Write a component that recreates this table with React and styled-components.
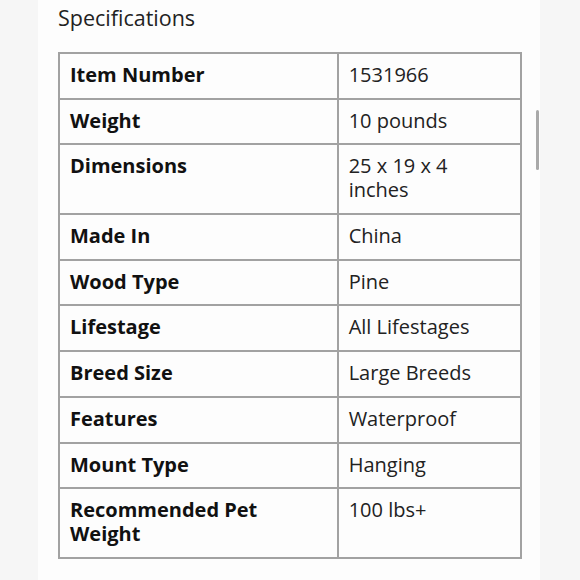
import React from 'react';
import styled, { createGlobalStyle } from 'styled-components';

const Global = createGlobalStyle`
body {
  margin: 0;
  background: #f6f6f6;
  font-family: "Open Sans", "Noto Sans", sans-serif;
  color: #1c1c1c;
}
`

const Page = styled.div`
position: relative;
width: 580px;
height: 580px;
overflow: hidden;
`

const Panel = styled.section`
margin-left: 38px;
width: 502px;
height: 580px;
background: #fdfdfd;
padding: 6px 18px 0 20px;
box-sizing: border-box;
`

const Title = styled.h2`
margin: 0 0 22px;
font-size: 21.5px;
line-height: 24px;
font-weight: 400;
color: #222;
`

const Table = styled.table`
width: 464px;
border-collapse: collapse;
font-size: 20px;
line-height: 24px;
`

const Cell = styled.td`
border: 2px solid #a2a2a2;
padding: 9px 10px 10.7px 10px;
vertical-align: top;
width: ${p => p.$w}px;
font-weight: ${p => (p.$bold ? 700 : 400)};
color: ${p => (p.$bold ? '#111' : '#222')};
`

const Scroll = styled.div`
position: absolute;
left: 536px;
top: 110px;
width: 3px;
height: 60px;
border-radius: 2px;
background: #a9a9a9;
`

const specs = [
  ['Item Number', '1531966'],
  ['Weight', '10 pounds'],
  ['Dimensions', '25 x 19 x 4 inches'],
  ['Made In', 'China'],
  ['Wood Type', 'Pine'],
  ['Lifestage', 'All Lifestages'],
  ['Breed Size', 'Large Breeds'],
  ['Features', 'Waterproof'],
  ['Mount Type', 'Hanging'],
  ['Recommended Pet Weight', '100 lbs+'],
];

export default function App() {
  return (
    <Page>
      <Global />
      <Panel>
        <Title>Specifications</Title>
        <Table>
          <tbody>
            {specs.map(([k, v]) => (
              <tr key={k}>
                <Cell $bold $w={258}>{k}</Cell>
                <Cell $w={162}>{v}</Cell>
              </tr>
            ))}
          </tbody>
        </Table>
      </Panel>
      <Scroll />
    </Page>
  );
}
